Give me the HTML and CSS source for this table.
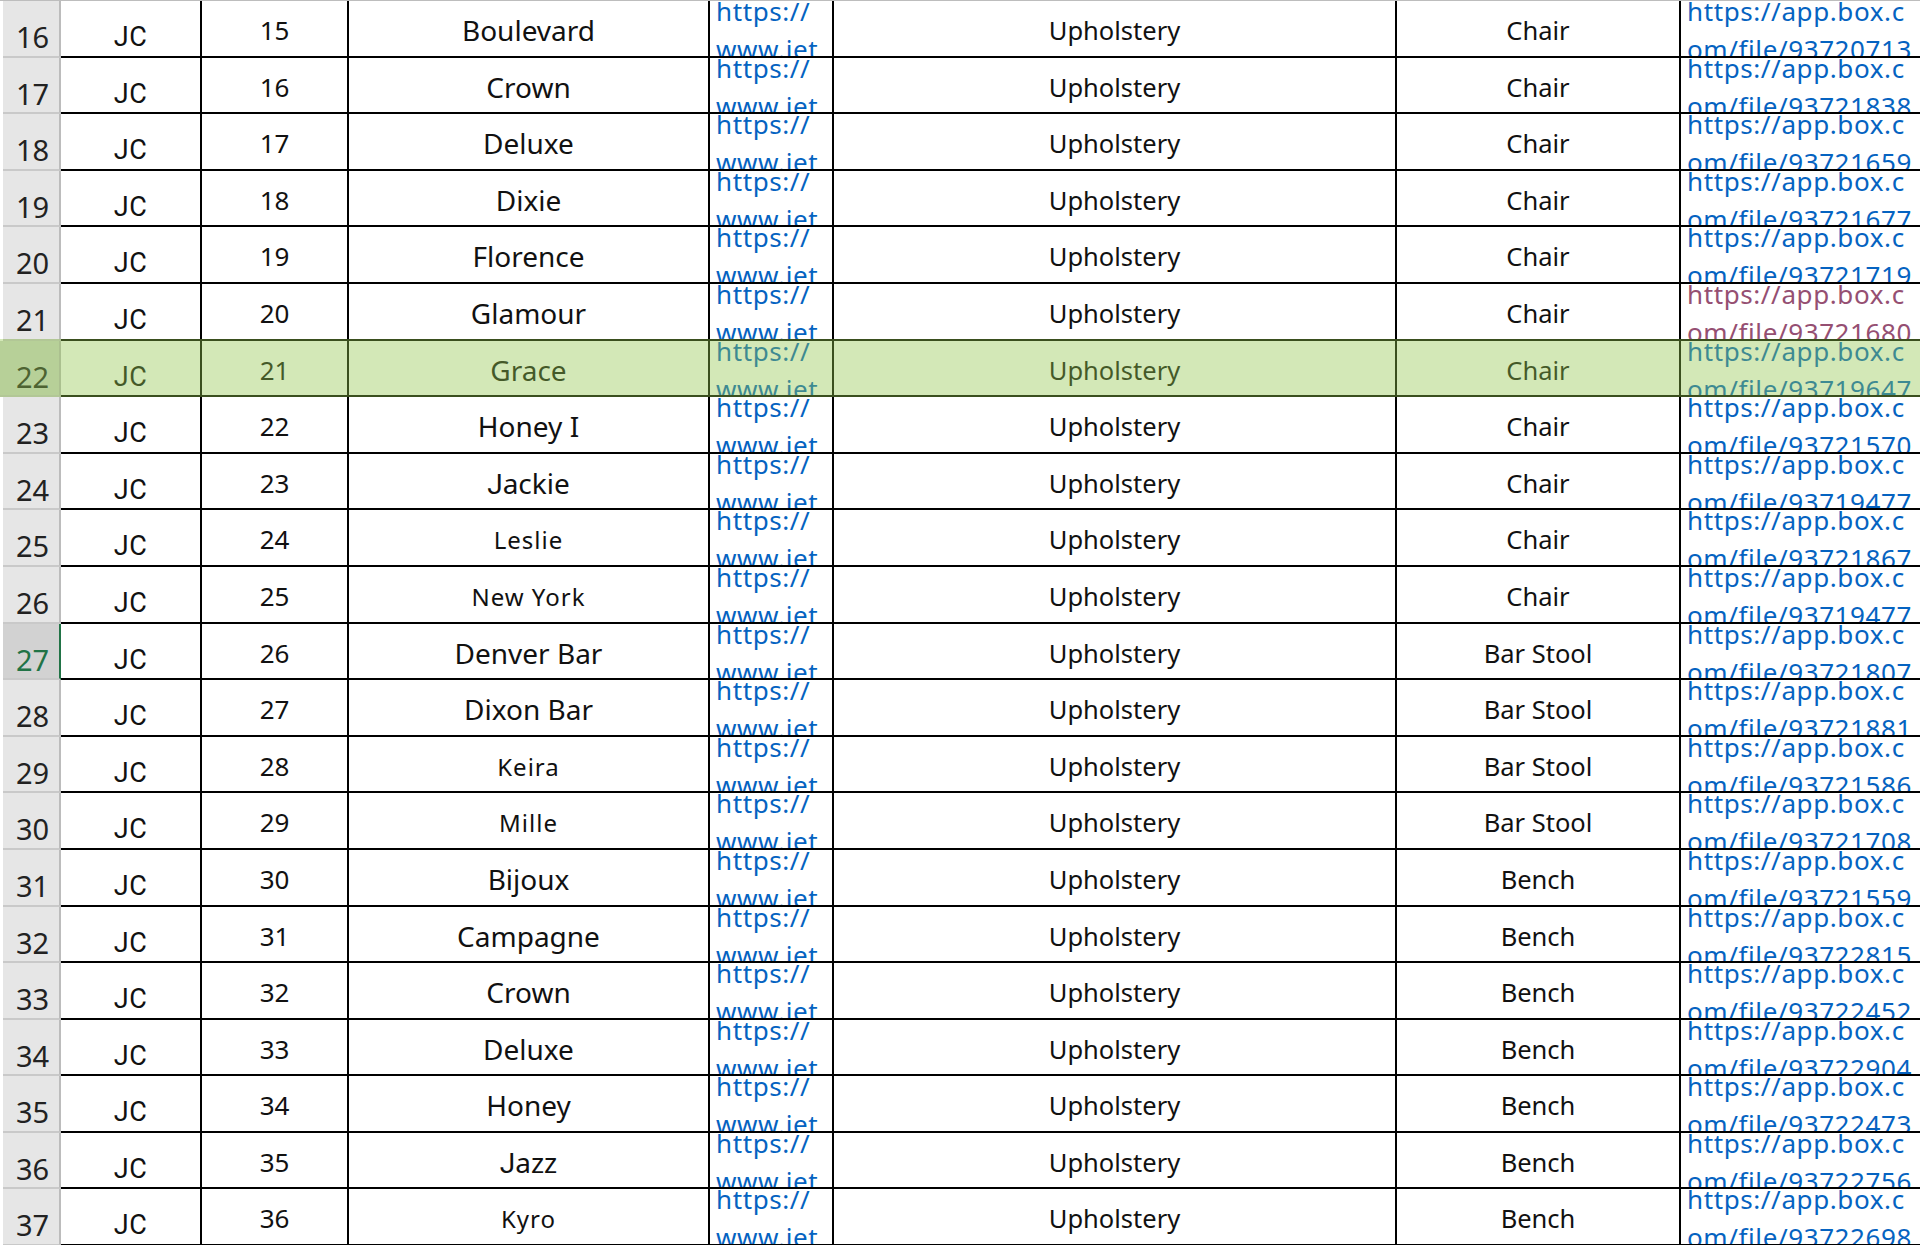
FILE: index.html
```html
<!DOCTYPE html>
<html>
<head>
<meta charset="utf-8">
<link rel="stylesheet" href="styles.css">
</head>
<body>
<div class="sheet" id="sheet">
  <div class="row"><div class="rh">16</div><div class="c a">JC</div><div class="c b">15</div><div class="c n">Boulevard</div><div class="c lk"><div class="lines"><span>https://</span><span>www.jet</span></div></div><div class="c e">Upholstery</div><div class="c f">Chair</div><div class="c g"><div class="lines"><span>https://app.box.c</span><span>om/file/93720713</span></div></div></div>
  <div class="row"><div class="rh">17</div><div class="c a">JC</div><div class="c b">16</div><div class="c n">Crown</div><div class="c lk"><div class="lines"><span>https://</span><span>www.jet</span></div></div><div class="c e">Upholstery</div><div class="c f">Chair</div><div class="c g"><div class="lines"><span>https://app.box.c</span><span>om/file/93721838</span></div></div></div>
  <div class="row"><div class="rh">18</div><div class="c a">JC</div><div class="c b">17</div><div class="c n">Deluxe</div><div class="c lk"><div class="lines"><span>https://</span><span>www.jet</span></div></div><div class="c e">Upholstery</div><div class="c f">Chair</div><div class="c g"><div class="lines"><span>https://app.box.c</span><span>om/file/93721659</span></div></div></div>
  <div class="row"><div class="rh">19</div><div class="c a">JC</div><div class="c b">18</div><div class="c n">Dixie</div><div class="c lk"><div class="lines"><span>https://</span><span>www.jet</span></div></div><div class="c e">Upholstery</div><div class="c f">Chair</div><div class="c g"><div class="lines"><span>https://app.box.c</span><span>om/file/93721677</span></div></div></div>
  <div class="row"><div class="rh">20</div><div class="c a">JC</div><div class="c b">19</div><div class="c n">Florence</div><div class="c lk"><div class="lines"><span>https://</span><span>www.jet</span></div></div><div class="c e">Upholstery</div><div class="c f">Chair</div><div class="c g"><div class="lines"><span>https://app.box.c</span><span>om/file/93721719</span></div></div></div>
  <div class="row"><div class="rh">21</div><div class="c a">JC</div><div class="c b">20</div><div class="c n">Glamour</div><div class="c lk"><div class="lines"><span>https://</span><span>www.jet</span></div></div><div class="c e">Upholstery</div><div class="c f">Chair</div><div class="c g visited"><div class="lines"><span>https://app.box.c</span><span>om/file/93721680</span></div></div></div>
  <div class="row sel"><div class="rh">22</div><div class="c a">JC</div><div class="c b">21</div><div class="c n">Grace</div><div class="c lk"><div class="lines"><span>https://</span><span>www.jet</span></div></div><div class="c e">Upholstery</div><div class="c f">Chair</div><div class="c g"><div class="lines"><span>https://app.box.c</span><span>om/file/93719647</span></div></div></div>
  <div class="row"><div class="rh">23</div><div class="c a">JC</div><div class="c b">22</div><div class="c n">Honey I</div><div class="c lk"><div class="lines"><span>https://</span><span>www.jet</span></div></div><div class="c e">Upholstery</div><div class="c f">Chair</div><div class="c g"><div class="lines"><span>https://app.box.c</span><span>om/file/93721570</span></div></div></div>
  <div class="row"><div class="rh">24</div><div class="c a">JC</div><div class="c b">23</div><div class="c n"><span class="j">J</span>ackie</div><div class="c lk"><div class="lines"><span>https://</span><span>www.jet</span></div></div><div class="c e">Upholstery</div><div class="c f">Chair</div><div class="c g"><div class="lines"><span>https://app.box.c</span><span>om/file/93719477</span></div></div></div>
  <div class="row"><div class="rh">25</div><div class="c a">JC</div><div class="c b">24</div><div class="c n sm">Leslie</div><div class="c lk"><div class="lines"><span>https://</span><span>www.jet</span></div></div><div class="c e">Upholstery</div><div class="c f">Chair</div><div class="c g"><div class="lines"><span>https://app.box.c</span><span>om/file/93721867</span></div></div></div>
  <div class="row"><div class="rh">26</div><div class="c a">JC</div><div class="c b">25</div><div class="c n sm">New York</div><div class="c lk"><div class="lines"><span>https://</span><span>www.jet</span></div></div><div class="c e">Upholstery</div><div class="c f">Chair</div><div class="c g"><div class="lines"><span>https://app.box.c</span><span>om/file/93719477</span></div></div></div>
  <div class="row active"><div class="rh">27</div><div class="c a">JC</div><div class="c b">26</div><div class="c n">Denver Bar</div><div class="c lk"><div class="lines"><span>https://</span><span>www.jet</span></div></div><div class="c e">Upholstery</div><div class="c f">Bar Stool</div><div class="c g"><div class="lines"><span>https://app.box.c</span><span>om/file/93721807</span></div></div></div>
  <div class="row"><div class="rh">28</div><div class="c a">JC</div><div class="c b">27</div><div class="c n">Dixon Bar</div><div class="c lk"><div class="lines"><span>https://</span><span>www.jet</span></div></div><div class="c e">Upholstery</div><div class="c f">Bar Stool</div><div class="c g"><div class="lines"><span>https://app.box.c</span><span>om/file/93721881</span></div></div></div>
  <div class="row"><div class="rh">29</div><div class="c a">JC</div><div class="c b">28</div><div class="c n sm">Keira</div><div class="c lk"><div class="lines"><span>https://</span><span>www.jet</span></div></div><div class="c e">Upholstery</div><div class="c f">Bar Stool</div><div class="c g"><div class="lines"><span>https://app.box.c</span><span>om/file/93721586</span></div></div></div>
  <div class="row"><div class="rh">30</div><div class="c a">JC</div><div class="c b">29</div><div class="c n sm">Mille</div><div class="c lk"><div class="lines"><span>https://</span><span>www.jet</span></div></div><div class="c e">Upholstery</div><div class="c f">Bar Stool</div><div class="c g"><div class="lines"><span>https://app.box.c</span><span>om/file/93721708</span></div></div></div>
  <div class="row"><div class="rh">31</div><div class="c a">JC</div><div class="c b">30</div><div class="c n">Bijoux</div><div class="c lk"><div class="lines"><span>https://</span><span>www.jet</span></div></div><div class="c e">Upholstery</div><div class="c f">Bench</div><div class="c g"><div class="lines"><span>https://app.box.c</span><span>om/file/93721559</span></div></div></div>
  <div class="row"><div class="rh">32</div><div class="c a">JC</div><div class="c b">31</div><div class="c n">Campagne</div><div class="c lk"><div class="lines"><span>https://</span><span>www.jet</span></div></div><div class="c e">Upholstery</div><div class="c f">Bench</div><div class="c g"><div class="lines"><span>https://app.box.c</span><span>om/file/93722815</span></div></div></div>
  <div class="row"><div class="rh">33</div><div class="c a">JC</div><div class="c b">32</div><div class="c n">Crown</div><div class="c lk"><div class="lines"><span>https://</span><span>www.jet</span></div></div><div class="c e">Upholstery</div><div class="c f">Bench</div><div class="c g"><div class="lines"><span>https://app.box.c</span><span>om/file/93722452</span></div></div></div>
  <div class="row"><div class="rh">34</div><div class="c a">JC</div><div class="c b">33</div><div class="c n">Deluxe</div><div class="c lk"><div class="lines"><span>https://</span><span>www.jet</span></div></div><div class="c e">Upholstery</div><div class="c f">Bench</div><div class="c g"><div class="lines"><span>https://app.box.c</span><span>om/file/93722904</span></div></div></div>
  <div class="row"><div class="rh">35</div><div class="c a">JC</div><div class="c b">34</div><div class="c n">Honey</div><div class="c lk"><div class="lines"><span>https://</span><span>www.jet</span></div></div><div class="c e">Upholstery</div><div class="c f">Bench</div><div class="c g"><div class="lines"><span>https://app.box.c</span><span>om/file/93722473</span></div></div></div>
  <div class="row"><div class="rh">36</div><div class="c a">JC</div><div class="c b">35</div><div class="c n"><span class="j">J</span>azz</div><div class="c lk"><div class="lines"><span>https://</span><span>www.jet</span></div></div><div class="c e">Upholstery</div><div class="c f">Bench</div><div class="c g"><div class="lines"><span>https://app.box.c</span><span>om/file/93722756</span></div></div></div>
  <div class="row"><div class="rh">37</div><div class="c a">JC</div><div class="c b">36</div><div class="c n sm">Kyro</div><div class="c lk"><div class="lines"><span>https://</span><span>www.jet</span></div></div><div class="c e">Upholstery</div><div class="c f">Bench</div><div class="c g"><div class="lines"><span>https://app.box.c</span><span>om/file/93722698</span></div></div></div>
</div>
</body>
</html>
```
FILE: styles.css
```css
html, body {
  margin: 0;
  padding: 0;
  background: #fff;
}
body {
  width: 1920px;
  height: 1245px;
  overflow: hidden;
  font-family: "Noto Sans", "Open Sans", sans-serif;
  color: #111;
}
.sheet {
  border-top: 1px solid #bdbdbd;
}
.row {
  position: relative;
  display: grid;
  grid-template-columns: 61px 141px 147px 361px 124px 563px 284px 1fr;
  height: 56.6px;
}
.rh {
  box-sizing: border-box;
  margin-left: 3px;
  background: #e6e6e6;
  border-right: 2px solid #bcbcbc;
  border-bottom: 2px solid #c9c9c9;
  text-align: center;
  font-size: 29px;
  line-height: 1;
  padding-top: 21px;
  padding-left: 3px;
  color: #222;
  overflow: hidden;
}
.c {
  box-sizing: border-box;
  border-right: 2px solid #000;
  border-bottom: 2px solid #000;
  overflow: hidden;
  text-align: center;
  line-height: 1;
  white-space: nowrap;
}
.a {
  font-family: Roboto, "Noto Sans", sans-serif;
  font-size: 27px;
  letter-spacing: 0.5px;
  padding-top: 23px;
}
.j {
  font-family: Roboto, "Noto Sans", sans-serif;
}
.b {
  font-size: 26px;
  padding-top: 16px;
}
.n {
  font-size: 28px;
  padding-top: 15px;
}
.n.sm {
  font-size: 24px;
  letter-spacing: 1px;
  padding-top: 18px;
}
.e, .f {
  font-size: 25.5px;
  padding-top: 17px;
}
.lk, .g {
  text-align: left;
  font-size: 26px;
  letter-spacing: 0.6px;
  color: #0563c1;
}
.lk {
  padding-left: 6px;
}
.g {
  border-right: 0;
  padding-left: 6px;
}
.g.visited {
  color: #954f72;
}
.lines {
  display: flex;
  flex-direction: column;
  line-height: 38px;
  margin-top: -9px;
}
.active .rh {
  background: #d2d2d2;
  color: #217346;
  border-right-color: #217346;
}
.sel .rh {
  margin-left: 0;
  padding-left: 6px;
  background: #d0d8cc;
}
.sel::after {
  content: "";
  position: absolute;
  left: 0;
  right: 0;
  top: -2px;
  bottom: 0;
  background: rgba(145, 197, 75, 0.4);
  pointer-events: none;
}
```
